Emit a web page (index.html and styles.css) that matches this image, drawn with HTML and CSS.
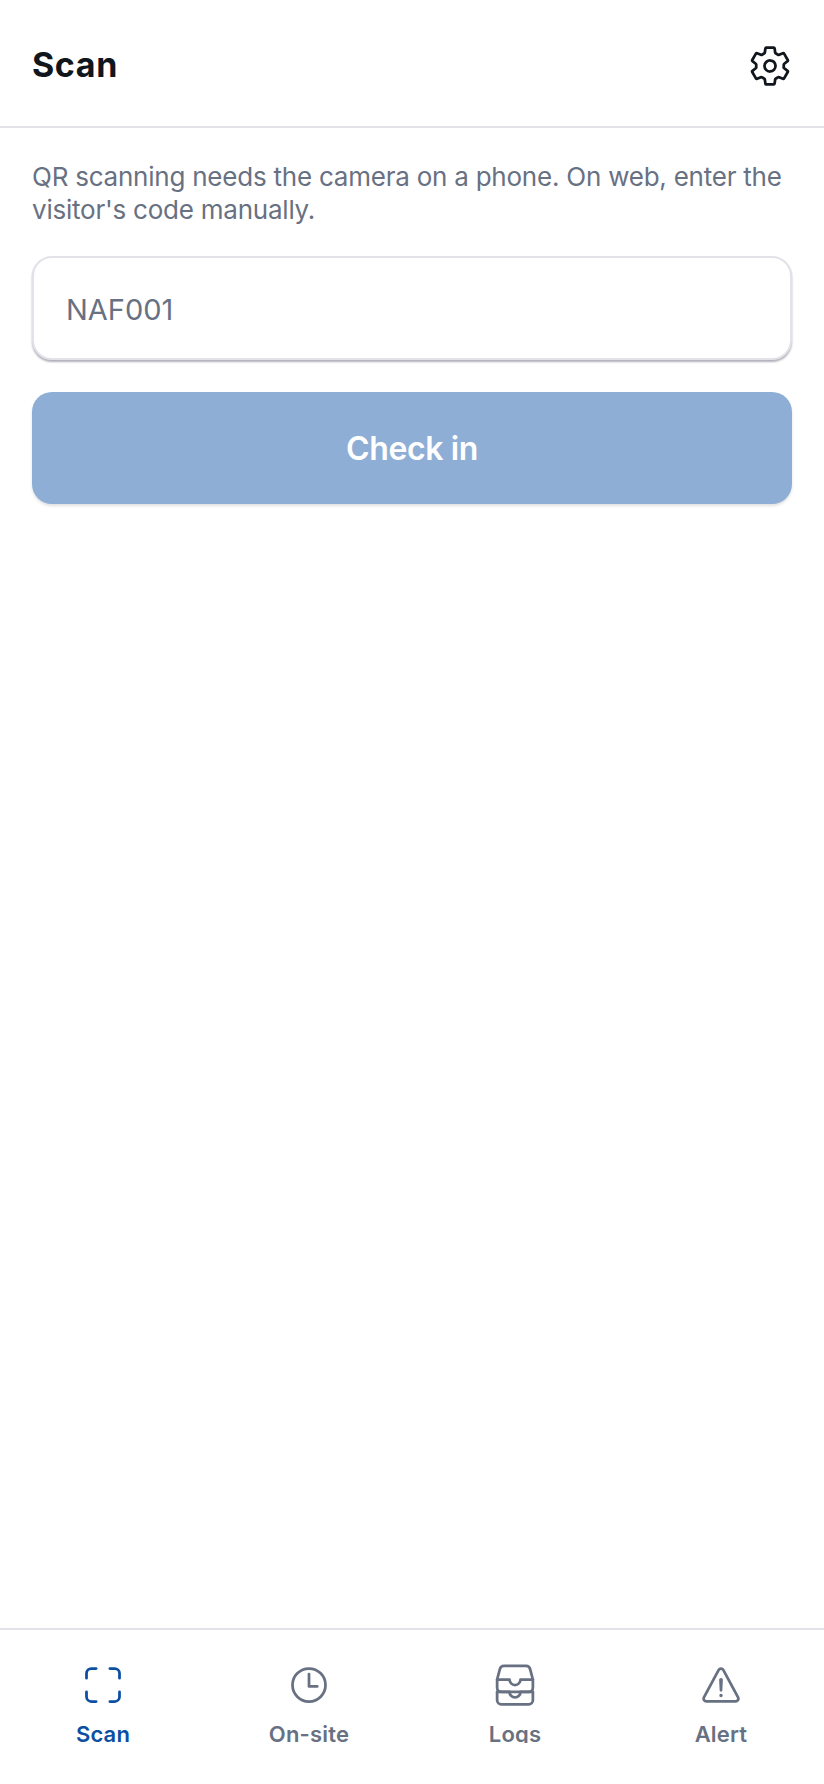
FILE: index.html
```html
<!DOCTYPE html>
<html>
<head>
	<title>Scan</title>
	<meta charset="utf-8">
	<link rel="stylesheet" href="styles.css">
</head>
<body>
  <div class="app">
  	<header class="top">
  		<h1>Scan</h1>
  		<svg class="icon gear" viewBox="0 0 512 512">
  			<path d="M262.29 192.31a64 64 0 1057.4 57.4 64.13 64.13 0 00-57.4-57.4zM416.39 256a154.34 154.34 0 01-1.53 20.79l45.21 35.46a10.81 10.81 0 012.45 13.75l-42.77 74a10.81 10.81 0 01-13.14 4.59l-44.9-18.08a16.11 16.11 0 00-15.17 1.75A164.48 164.48 0 01325 400.8a15.94 15.94 0 00-8.82 12.14l-6.73 47.89a11.08 11.08 0 01-10.68 9.17h-85.54a11.11 11.11 0 01-10.69-8.87l-6.72-47.82a16.07 16.07 0 00-9-12.22 155.3 155.3 0 01-21.46-12.57 16 16 0 00-15.11-1.71l-44.89 18.07a10.81 10.81 0 01-13.14-4.58l-42.77-74a10.8 10.8 0 012.45-13.75l38.21-30a16.05 16.05 0 006-14.08c-.36-4.17-.58-8.33-.58-12.5s.21-8.27.58-12.35a16 16 0 00-6.07-13.94l-38.19-30A10.81 10.81 0 0149.48 186l42.77-74a10.81 10.81 0 0113.14-4.59l44.9 18.08a16.11 16.11 0 0015.17-1.75A164.48 164.48 0 01187 111.2a15.94 15.94 0 008.82-12.14l6.73-47.89A11.08 11.08 0 01213.23 42h85.54a11.11 11.11 0 0110.69 8.87l6.72 47.82a16.07 16.07 0 009 12.22 155.3 155.3 0 0121.46 12.57 16 16 0 0015.11 1.71l44.89-18.07a10.81 10.81 0 0113.14 4.58l42.77 74a10.8 10.8 0 01-2.45 13.75l-38.21 30a16.05 16.05 0 00-6.07 14.08c.33 4.14.55 8.3.55 12.47z"/>
  		</svg>
  	</header>
  	<main class="content">
  		<p class="hint">QR scanning needs the camera on a phone. On web, enter the visitor's code manually.</p>
  		<input class="code" type="text" placeholder="NAF001">
  		<button class="check">Check in</button>
  	</main>
  	<nav class="tabs">
  		<div class="tab active">
  			<svg class="icon" viewBox="0 0 512 512">
  				<path d="M336 448h56a56 56 0 0056-56v-56M448 176v-56a56 56 0 00-56-56h-56M176 448h-56a56 56 0 01-56-56v-56M64 176v-56a56 56 0 0156-56h56"/>
  			</svg>
  			<span class="label">Scan</span>
  		</div>
  		<div class="tab">
  			<svg class="icon" viewBox="0 0 512 512">
  				<path d="M256 64C150 64 64 150 64 256s86 192 192 192 192-86 192-192S362 64 256 64z"/>
  				<path d="M256 128v144h96"/>
  			</svg>
  			<span class="label">On-site</span>
  		</div>
  		<div class="tab">
  			<svg class="icon" viewBox="0 0 512 512">
  				<path d="M48 336v96a48 48 0 0048 48h320a48 48 0 0048-48v-96"/>
  				<path d="M48 336h144M320 336h144M192 336a64 64 0 00128 0"/>
  				<path d="M384 32H128c-26 0-43 14-48 40L48 192v96a48 48 0 0048 48h320a48 48 0 0048-48v-96L432 72c-5-27-23-40-48-40z"/>
  				<path d="M48 192h144M320 192h144M192 192a64 64 0 00128 0"/>
  			</svg>
  			<span class="label">Logs</span>
  		</div>
  		<div class="tab">
  			<svg class="icon" viewBox="0 0 512 512">
  				<path d="M85.57 446.25h340.86a32 32 0 0028.17-47.17L284.18 82.58c-12.09-22.44-44.27-22.44-56.36 0L57.4 399.08a32 32 0 0028.17 47.17z"/>
  				<path d="M250.26 195.39l5.74 122 5.73-121.95a5.74 5.74 0 00-5.79-6h0a5.74 5.74 0 00-5.68 5.95z"/>
  				<path class="dot" d="M256 397.25a20 20 0 1120-20 20 20 0 01-20 20z"/>
  			</svg>
  			<span class="label">Alert</span>
  		</div>
  	</nav>
  </div>
</body>
</html>
```

FILE: styles.css
```css
html, body {
	margin: 0;
	padding: 0;
	background: #fff;
}
.app {
	display: flex;
	flex-direction: column;
	height: 1784px;
	font-family: Inter, "Liberation Sans", sans-serif;
}
.icon {
	display: block;
	width: 44px;
	height: 44px;
	fill: none;
	stroke: currentColor;
	stroke-width: 32;
	stroke-linecap: round;
	stroke-linejoin: round;
}
.icon .dot {
	fill: currentColor;
	stroke: none;
}
.top {
	display: flex;
	align-items: center;
	justify-content: space-between;
	box-sizing: border-box;
	height: 128px;
	padding: 3px 32px 0 32px;
	border-bottom: 2px solid #e2e2e8;
}
.top h1 {
	margin: 0;
	font-size: 34px;
	font-weight: 700;
	letter-spacing: 0.6px;
	color: #11151c;
}
.gear {
	color: #11151c;
	margin-top: 2px;
}
.content {
	flex: 1;
	display: flex;
	flex-direction: column;
	padding: 32px;
}
.hint {
	margin: 0 0 30px 0;
	font-size: 26px;
	line-height: 33px;
	letter-spacing: -0.23px;
	color: #687182;
}
.code {
	height: 104px;
	box-sizing: border-box;
	padding: 2px 32px 0 32px;
	border: 2px solid #e2e2e8;
	border-radius: 20px;
	box-shadow: 0 2px 2px rgba(60, 60, 80, 0.4);
	font-family: inherit;
	font-size: 29px;
	color: #11151c;
	outline: none;
}
.code::placeholder {
	color: #687182;
	opacity: 1;
}
.check {
	height: 112px;
	margin-top: 32px;
	border: 0;
	border-radius: 20px;
	background: #8faed6;
	box-shadow: 0 2px 3px rgba(0, 0, 0, 0.12);
	font-family: inherit;
	font-size: 32px;
	font-weight: 600;
	letter-spacing: -0.4px;
	color: #fff;
}
.tabs {
	display: flex;
	box-sizing: border-box;
	height: 156px;
	border-top: 2px solid #e2e2e8;
}
.tab {
	flex: 1;
	display: flex;
	flex-direction: column;
	align-items: center;
	padding-top: 33px;
	color: #687182;
}
.tab.active {
	color: #0b4ea2;
}
.label {
	display: block;
	height: 22px;
	overflow: hidden;
	margin-top: 14px;
	font-size: 22px;
	line-height: 26px;
	font-weight: 600;
	letter-spacing: 0.2px;
}
```
